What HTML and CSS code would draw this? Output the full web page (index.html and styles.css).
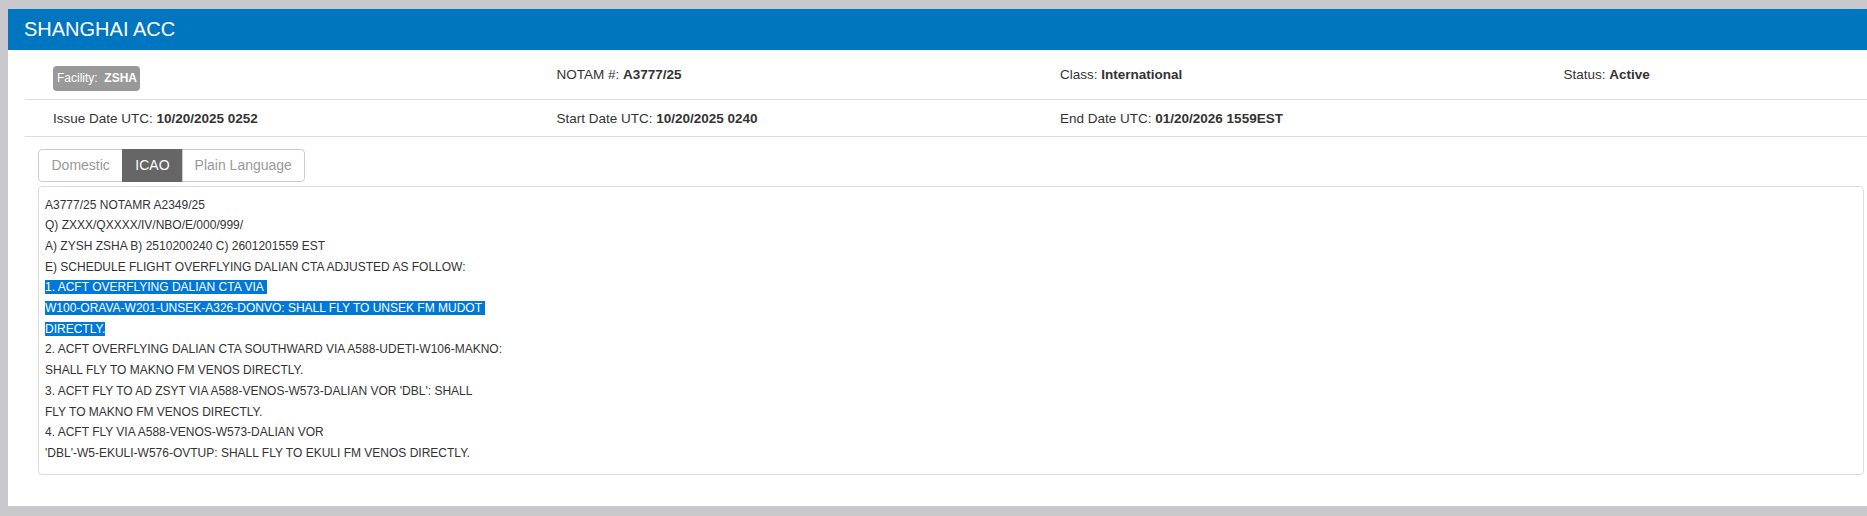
FILE: index.html
```html
<!DOCTYPE html>
<html>
<head>
<meta charset="utf-8">
<link rel="stylesheet" href="styles.css">
</head>
<body>
<div class="panel">
  <div class="panel-head">SHANGHAI ACC</div>
  <div class="panel-body">
    <div class="info-row first">
      <div class="cell"><span class="badge">Facility:&nbsp; <b>ZSHA</b></span></div>
      <div class="cell">NOTAM #: <b>A3777/25</b></div>
      <div class="cell">Class: <b>International</b></div>
      <div class="cell">Status: <b>Active</b></div>
    </div>
    <div class="info-row second">
      <div class="cell">Issue Date UTC: <b>10/20/2025 0252</b></div>
      <div class="cell">Start Date UTC: <b>10/20/2025 0240</b></div>
      <div class="cell">End Date UTC: <b>01/20/2026 1559EST</b></div>
      <div class="cell"></div>
    </div>
    <div class="tabs">
      <div class="tab">Domestic</div>
      <div class="tab active">ICAO</div>
      <div class="tab">Plain Language</div>
    </div>
    <div class="notam">
      <div class="line">A3777/25 NOTAMR A2349/25</div>
      <div class="line">Q) ZXXX/QXXXX/IV/NBO/E/000/999/</div>
      <div class="line">A) ZYSH ZSHA B) 2510200240 C) 2601201559 EST</div>
      <div class="line">E) SCHEDULE FLIGHT OVERFLYING DALIAN CTA ADJUSTED AS FOLLOW:</div>
      <div class="line"><span class="sel">1. ACFT OVERFLYING DALIAN CTA VIA&nbsp;</span></div>
      <div class="line"><span class="sel">W100-ORAVA-W201-UNSEK-A326-DONVO: SHALL FLY TO UNSEK FM MUDOT&nbsp;</span></div>
      <div class="line"><span class="sel">DIRECTLY.</span></div>
      <div class="line">2. ACFT OVERFLYING DALIAN CTA SOUTHWARD VIA A588-UDETI-W106-MAKNO:</div>
      <div class="line">SHALL FLY TO MAKNO FM VENOS DIRECTLY.</div>
      <div class="line">3. ACFT FLY TO AD ZSYT VIA A588-VENOS-W573-DALIAN VOR 'DBL': SHALL</div>
      <div class="line">FLY TO MAKNO FM VENOS DIRECTLY.</div>
      <div class="line">4. ACFT FLY VIA A588-VENOS-W573-DALIAN VOR</div>
      <div class="line">'DBL'-W5-EKULI-W576-OVTUP: SHALL FLY TO EKULI FM VENOS DIRECTLY.</div>
    </div>
  </div>
</div>
</body>
</html>
```

FILE: styles.css
```css
html, body {
  margin: 0;
  padding: 0;
}
body {
  background: #c8c7cc;
  font-family: "Liberation Sans", Arial, sans-serif;
  color: #333;
  overflow: hidden;
  height: 516px;
}
.panel {
  margin: 9px 0 0 8px;
  background: #fff;
  height: 497px;
}
.panel-head {
  background: #0076c0;
  color: #fff;
  font-size: 20px;
  height: 41px;
  line-height: 41px;
  padding-left: 16px;
}
.panel-body {
  padding-left: 17px;
  overflow: hidden;
}
.info-row {
  display: grid;
  grid-template-columns: repeat(4, 503.5px);
  align-items: center;
  border-bottom: 1px solid #ddd;
  font-size: 13.5px;
  width: 2014px;
}
.info-row.first {
  height: 49px;
}
.info-row.second {
  height: 36px;
}
.cell {
  padding-left: 28px;
}
.info-row b {
  font-weight: bold;
}
.badge {
  display: inline-block;
  background: #999;
  color: #fff;
  font-size: 12px;
  height: 25px;
  line-height: 25px;
  padding: 0 3px 0 4px;
  border-radius: 4px;
  margin-top: 7px;
}
.tabs {
  display: flex;
  margin: 12px 0 0 13px;
}
.tab {
  font-size: 14px;
  color: #999;
  border: 1px solid #ccc;
  height: 31px;
  line-height: 31px;
  padding: 0 12px;
  margin-left: -1px;
}
.tab:first-child {
  border-radius: 4px 0 0 4px;
  margin-left: 0;
  padding: 0 12.5px;
}
.tab:last-child {
  border-radius: 0 4px 4px 0;
}
.tab.active {
  background: #666;
  border-color: #666;
  color: #fff;
}
.notam {
  margin: 4px 3px 0 13px;
  border: 1px solid #ddd;
  border-radius: 4px;
  box-shadow: 0 1px 1px rgba(0,0,0,0.05);
  padding: 7.5px 6px 10px 6px;
  font-size: 12px;
  line-height: 20.7px;
  color: #333;
}
.sel {
  background: #0078d7;
  color: #fff;
}
```
